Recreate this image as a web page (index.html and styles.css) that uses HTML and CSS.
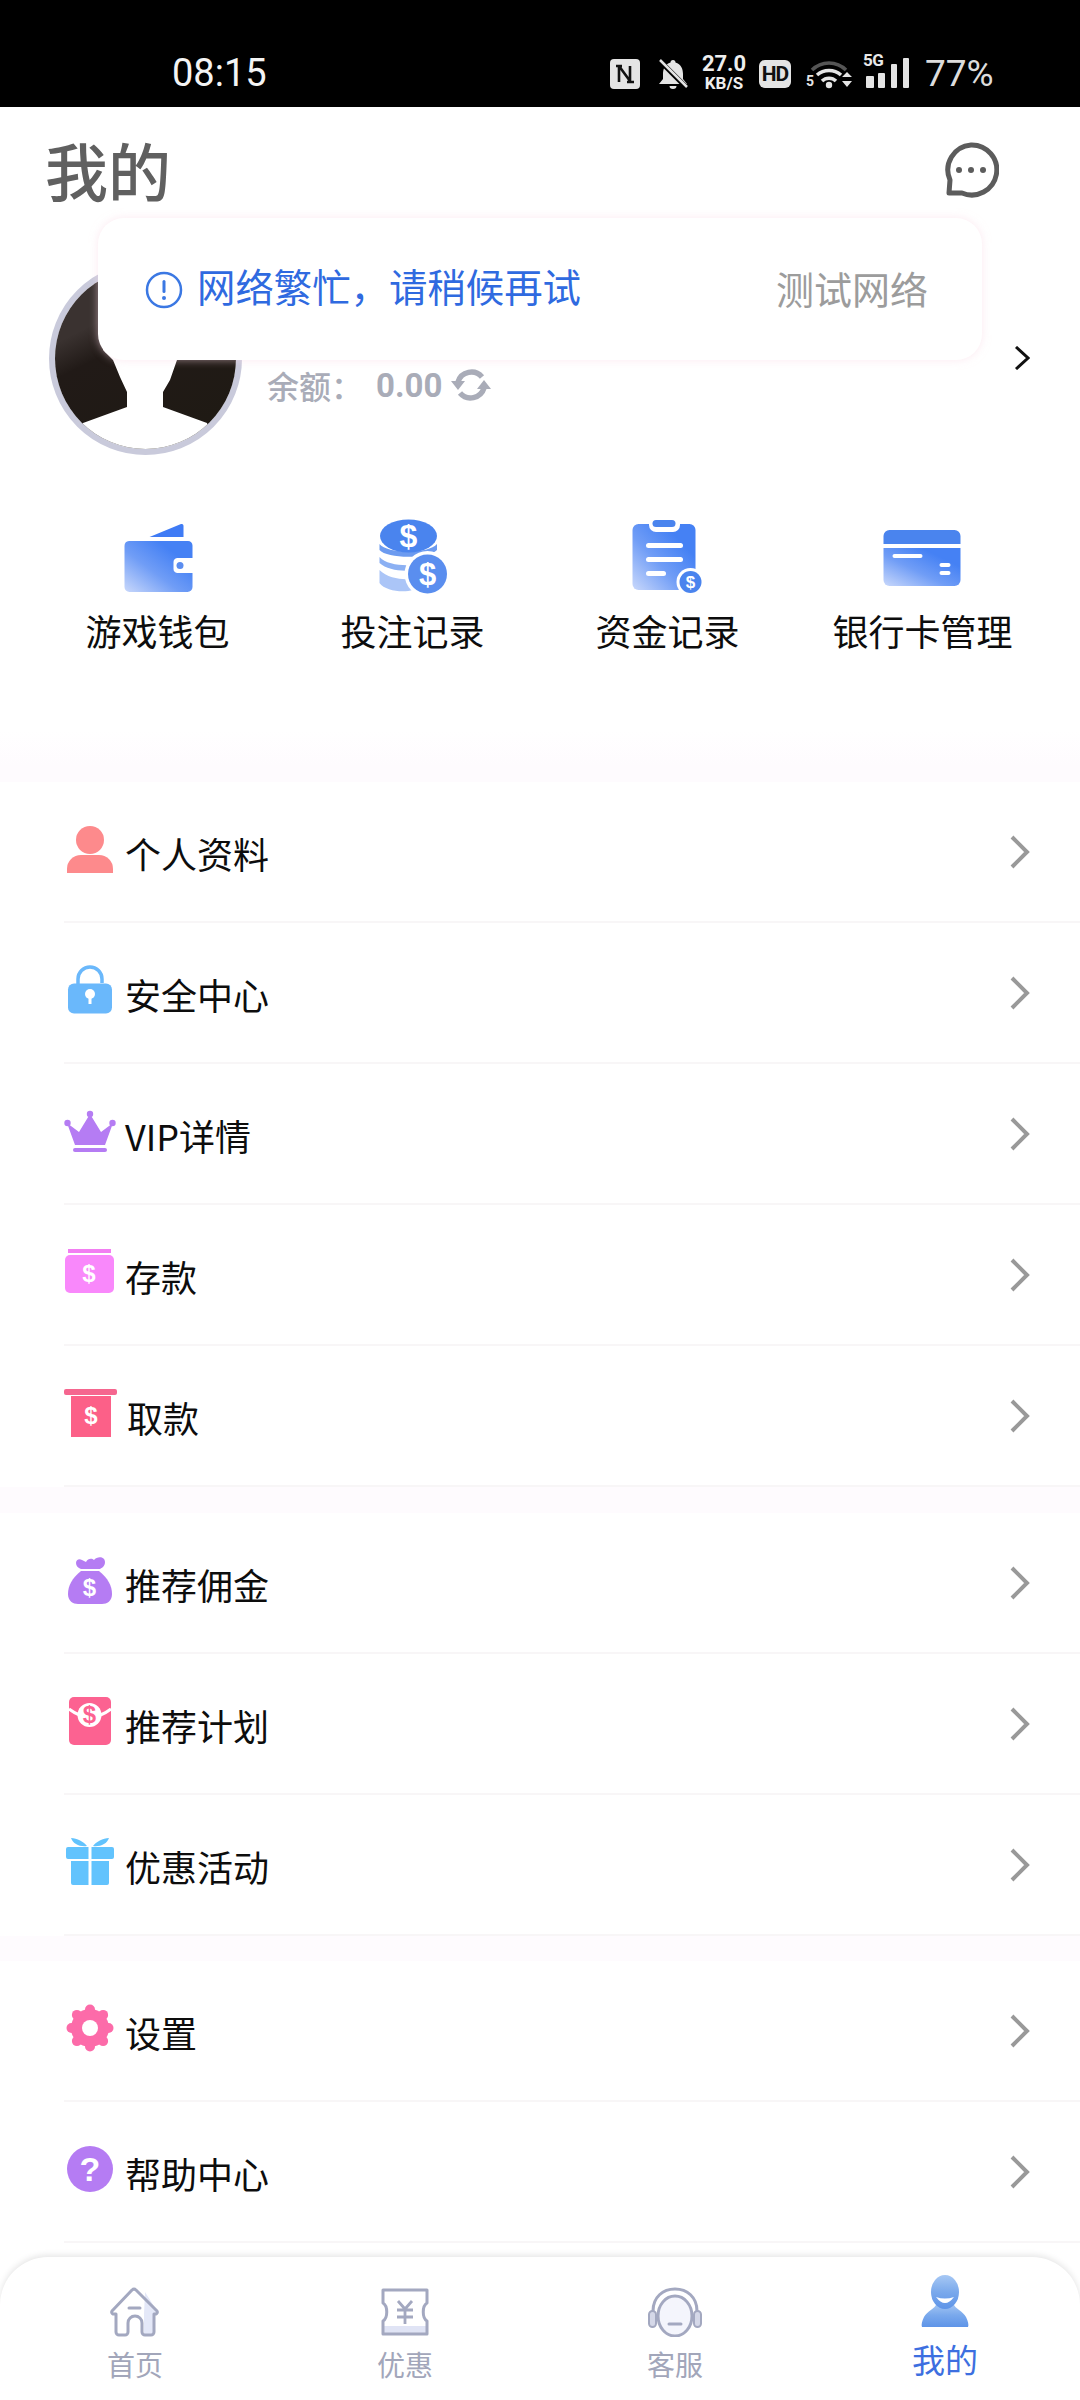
FILE: index.html
```html
<!DOCTYPE html>
<html lang="zh">
<head>
<meta charset="utf-8">
<title>我的</title>
<link rel="stylesheet" href="styles.css">
</head>
<body>
<div class="page">
  <div class="status">
    <span class="time">08:15</span>
    <svg class="st-nfc" viewBox="0 0 30 30"><rect width="30" height="30" rx="4" fill="#e4e4e4"/><path d="M9 7 V23 M9 7 L20 22 M20 7 V23 M6 7 H12 M17 23 H24" fill="none" stroke="#111" stroke-width="2.6"/></svg>
    <svg class="st-bell" viewBox="0 0 30 30"><path d="M15 1 a2.5 2.5 0 0 1 2.5 2.5 C23 5 25 10 25 15 V20 L29 25 H1 L5 20 V15 C5 10 7 5 12.500 3.500 A2.500 2.500 0 0 1 15 1 Z M11.500 27 H18.500 A3.500 3 0 0 1 11.500 27 Z" fill="#e4e4e4"/><path d="M3 3 L29 29" stroke="#000" stroke-width="5"/><path d="M2 1 L29 28" stroke="#e4e4e4" stroke-width="2.500"/></svg>
    <div class="st-speed"><span class="st-num">27.0</span><span class="st-unit">KB/S</span></div>
    <span class="st-hd">HD</span>
    <svg class="st-wifi" viewBox="0 0 48 34"><path d="M7 14 A24 24 0 0 1 41 14" fill="none" stroke="#555" stroke-width="3.500"/><path d="M12 19 A18 18 0 0 1 36 19" fill="none" stroke="#e4e4e4" stroke-width="3.500"/><path d="M17 25 A10 10 0 0 1 31 25" fill="none" stroke="#e4e4e4" stroke-width="3.500"/><circle cx="24" cy="29" r="3.200" fill="#e4e4e4"/><path d="M37 21 L47 21 L42 16 Z M37 25 L47 25 L42 31 Z" fill="#e4e4e4"/><text x="1" y="30" class="st-five">5</text></svg>
    <div class="st-signal">
      <span class="st-5g">5G</span>
      <svg class="st-bars" viewBox="0 0 44 32"><rect x="0" y="18" width="8" height="12" rx="1" fill="#e4e4e4"/><rect x="12" y="15" width="7" height="15" rx="1" fill="#e4e4e4"/><rect x="25" y="6" width="6" height="24" rx="1" fill="#e4e4e4"/><rect x="37" y="0" width="6" height="30" rx="1" fill="#e4e4e4"/></svg>
    </div>
    <span class="st-batt">77%</span>
  </div>

  <header class="header">
    <h1 class="title">我的</h1>
    <svg class="chat" viewBox="0 0 56 56"><path d="M28 3 A25 25 0 1 1 19 51 L6 51 L7 38 A25 25 0 0 1 28 3 Z" fill="none" stroke="#5c5c5c" stroke-width="5" stroke-linejoin="round"/><circle cx="16" cy="28" r="3" fill="#5c5c5c"/><circle cx="28" cy="28" r="3" fill="#5c5c5c"/><circle cx="40" cy="28" r="3" fill="#5c5c5c"/></svg>
  </header>

  <section class="profile">
    <svg class="avatar" viewBox="0 0 193 193">
      <defs>
        <linearGradient id="av" x1="0" y1="0" x2="0.5" y2="1"><stop offset="0.35" stop-color="#3a3230"/><stop offset="0.5" stop-color="#211a17"/><stop offset="1" stop-color="#1f1a14"/></linearGradient>
        <clipPath id="avc"><circle cx="96.500" cy="96.500" r="90.500"/></clipPath>
        <linearGradient id="blue" x1="0" y1="1" x2="0.75" y2="0.25"><stop offset="0" stop-color="#c9d8fb"/><stop offset="0.55" stop-color="#709df6"/><stop offset="1" stop-color="#4581f4"/></linearGradient>
        <linearGradient id="act" x1="0.5" y1="0" x2="0.5" y2="1"><stop offset="0" stop-color="#a7c8f4"/><stop offset="0.5" stop-color="#7aa9ec"/><stop offset="1" stop-color="#5e94e8"/></linearGradient>
      </defs>
      <circle cx="96.500" cy="96.500" r="93.500" fill="#fff" stroke="#c9cadb" stroke-width="6"/>
      <g clip-path="url(#avc)">
        <rect width="193" height="193" fill="url(#av)"/>
        <path d="M34 161 L78 145 V130 L71 115 L64 98 L54 88 L60 30 H128 L128 98 L121 118 L114 130 V145 L158 161 L170 200 H20 Z" fill="#fff"/>
      </g>
    </svg>
    <div class="balance">
      <span class="bal-label">余额：</span>
      <span class="bal-value">0.00</span>
      <svg class="refresh" viewBox="0 0 40 36"><path d="M7 15 A14 14 0 0 1 31 10" fill="none" stroke="#a9acb8" stroke-width="5.500"/><path d="M33 21 A14 14 0 0 1 9 26" fill="none" stroke="#a9acb8" stroke-width="5.500"/><path d="M0 14 H14 L7 23 Z M26 22 H40 L33 13 Z" fill="#a9acb8"/></svg>
    </div>
    <svg class="profile-chev" viewBox="0 0 16 24"><path d="M2 1 L14 12 L2 23" fill="none" stroke="#111" stroke-width="3"/></svg>
  </section>

  <nav class="actions">
    <div class="action">
      <svg class="action-icon" viewBox="0 0 80 80"><path d="M31.500 20 L63 7 a2 2 0 0 1 2.500 2 V20 Z" fill="#3f7bf5"/><path d="M11 24 H70 a4.500 4.500 0 0 1 4.500 4.500 V41 H60 a4 4 0 0 0-4.500 4 V52 a4 4 0 0 0 4.500 4 H74.500 V70 a5 5 0 0 1-5 5 H11.500 a5 5 0 0 1-5-5 V29 a5 5 0 0 1 4.500-5 Z" fill="url(#blue)"/><circle cx="62" cy="48.500" r="3.500" fill="#5b8df0"/></svg>
      <span class="action-label">游戏钱包</span>
    </div>
    <div class="action">
      <svg class="action-icon" viewBox="0 0 80 80"><path d="M6.500 27 C14 37 56 37 64 27 V33 C56 42 14 42 6.500 33 Z" fill="#6c9bf0"/><path d="M6.500 40 C14 49 40 50 46 46 L41 53 C30 55 14 53 6.500 46 Z" fill="#8bb0f3"/><path d="M6.500 53 C14 61 30 63 36 62 L40 73 C30 76 12 74 6.500 66 Z" fill="#abc5f7"/><ellipse cx="35.500" cy="19" rx="28.500" ry="16.500" fill="#4a84ee"/><text x="35.500" y="30" class="coin-big">$</text><circle cx="54.500" cy="57" r="23" fill="#fff"/><circle cx="54.500" cy="57" r="19.500" fill="#5a8eef"/><text x="54.500" y="68" class="coin-mid">$</text></svg>
      <span class="action-label">投注记录</span>
    </div>
    <div class="action">
      <svg class="action-icon" viewBox="0 0 80 80"><rect x="4.500" y="7" width="63" height="66" rx="6" fill="url(#blue)"/><rect x="21" y="0" width="31" height="15" rx="7" fill="#fff"/><rect x="24.500" y="3" width="23" height="7" rx="3.500" fill="#4a84ee"/><rect x="18" y="26" width="37" height="5" rx="2.500" fill="#fff"/><rect x="18" y="40" width="37" height="5" rx="2.500" fill="#fff"/><rect x="18" y="54" width="20" height="5" rx="2.500" fill="#fff"/><circle cx="62.500" cy="65" r="14" fill="#fff"/><circle cx="62.500" cy="65" r="11" fill="#4a84ee"/><text x="62.500" y="71" class="coin-small">$</text></svg>
      <span class="action-label">资金记录</span>
    </div>
    <div class="action">
      <svg class="action-icon" viewBox="0 0 80 80"><path d="M6.500 13 H71.500 a6 6 0 0 1 6 6 V27 H0.500 V19 a6 6 0 0 1 6-6 Z" fill="#4a84ee"/><path d="M0.500 31 H77.500 V63 a6 6 0 0 1-6 6 H6.500 a6 6 0 0 1-6-6 Z" fill="url(#blue)"/><rect x="9.500" y="37" width="30" height="4" rx="2" fill="#fff"/><rect x="56.500" y="46" width="11" height="4" rx="2" fill="#fff"/><rect x="56.500" y="54" width="11" height="4" rx="2" fill="#fff"/></svg>
      <span class="action-label">银行卡管理</span>
    </div>
  </nav>

  <div class="band band-top"></div>

  <ul class="menu">
    <li class="row">
      <svg class="row-icon" viewBox="0 0 52 52"><circle cx="26" cy="17" r="14" fill="#fd8a8c"/><path d="M3 50 V46 A14 14 0 0 1 17 32 H35 A14 14 0 0 1 49 46 V50 Z" fill="#fd8a8c"/></svg>
      <span class="row-label">个人资料</span>
      <svg class="chev" viewBox="0 0 22 36"><path d="M3 3 L18 18 L3 33" fill="none" stroke="#999" stroke-width="4"/></svg>
    </li>
    <li class="row">
      <svg class="row-icon" viewBox="0 0 52 52"><path d="M14 21 V15 A12 12 0 0 1 38 15 V19" fill="none" stroke="#6ab8fb" stroke-width="3.500"/><rect x="4" y="19.500" width="44" height="30" rx="6" fill="#6ab8fb"/><circle cx="26" cy="30" r="5" fill="#fff"/><rect x="24.500" y="30" width="3" height="10" fill="#fff"/></svg>
      <span class="row-label">安全中心</span>
      <svg class="chev" viewBox="0 0 22 36"><path d="M3 3 L18 18 L3 33" fill="none" stroke="#999" stroke-width="4"/></svg>
    </li>
    <li class="row">
      <svg class="row-icon" viewBox="0 0 52 52"><path d="M3 18 L15 27 L26 9 L37 27 L49 18 L41 40 H11 Z" fill="#b57cf3"/><circle cx="3.500" cy="18" r="3.200" fill="#b57cf3"/><circle cx="26" cy="9" r="3.200" fill="#b57cf3"/><circle cx="48.500" cy="18" r="3.200" fill="#b57cf3"/><rect x="9" y="43" width="34" height="4" rx="2" fill="#b57cf3"/></svg>
      <span class="row-label">VIP详情</span>
      <svg class="chev" viewBox="0 0 22 36"><path d="M3 3 L18 18 L3 33" fill="none" stroke="#999" stroke-width="4"/></svg>
    </li>
    <li class="row">
      <svg class="row-icon" viewBox="0 0 52 52"><rect x="4" y="3" width="43" height="4" fill="#f27ef2"/><rect x="1" y="9" width="49" height="38" rx="5" fill="#f988fb"/><text x="25" y="36" class="dollar">$</text></svg>
      <span class="row-label">存款</span>
      <svg class="chev" viewBox="0 0 22 36"><path d="M3 3 L18 18 L3 33" fill="none" stroke="#999" stroke-width="4"/></svg>
    </li>
    <li class="row">
      <svg class="row-icon icon-wide" viewBox="0 0 54 52"><rect x="0" y="2" width="53" height="6" rx="2" fill="#f5668f"/><rect x="7" y="9" width="40" height="41" fill="#fc6088"/><text x="27" y="37" class="dollar">$</text></svg>
      <span class="row-label">取款</span>
      <svg class="chev" viewBox="0 0 22 36"><path d="M3 3 L18 18 L3 33" fill="none" stroke="#999" stroke-width="4"/></svg>
    </li>
  </ul>

  <div class="band band-a"></div>

  <ul class="menu">
    <li class="row">
      <svg class="row-icon" viewBox="0 0 52 52"><path d="M12 9 C12 6 15 4 18 6 L22 8 C24 4 28 4 30 6 C33 2 41 2 41 8 C41 12 38 14 36 15 H17 C14 14 12 12 12 9 Z" fill="#b57cf3"/><path d="M17 17 H35 C44 24 48 32 48 40 C48 47 43 50 38 50 H14 C9 50 4 47 4 40 C4 32 8 24 17 17 Z" fill="#b57cf3"/><text x="25.500" y="42" class="dollar">$</text></svg>
      <span class="row-label">推荐佣金</span>
      <svg class="chev" viewBox="0 0 22 36"><path d="M3 3 L18 18 L3 33" fill="none" stroke="#999" stroke-width="4"/></svg>
    </li>
    <li class="row">
      <svg class="row-icon" viewBox="0 0 52 52"><rect x="5" y="2" width="42" height="48" rx="5" fill="#fc6291"/><path d="M5 14 Q26 30 47 14" fill="none" stroke="#fff" stroke-width="3"/><circle cx="25.500" cy="20" r="12" fill="#fff"/><text x="25.500" y="28" class="dollar dollar-pink">$</text></svg>
      <span class="row-label">推荐计划</span>
      <svg class="chev" viewBox="0 0 22 36"><path d="M3 3 L18 18 L3 33" fill="none" stroke="#999" stroke-width="4"/></svg>
    </li>
    <li class="row">
      <svg class="row-icon" viewBox="0 0 52 52"><path d="M7 2 C13 2 20 6 23 10 C16 11 9 8 7 2 Z M45 2 C39 2 32 6 29 10 C36 11 43 8 45 2 Z" fill="#62c3fd"/><path d="M4 11 H24.500 V23 H4 a2 2 0 0 1-2-2 V13 a2 2 0 0 1 2-2 Z M27.500 11 H48 a2 2 0 0 1 2 2 V21 a2 2 0 0 1-2 2 H27.500 Z" fill="#62c3fd"/><path d="M7 25 H24.500 V49 H9 a2 2 0 0 1-2-2 Z M27.500 25 H45 V47 a2 2 0 0 1-2 2 H27.500 Z" fill="#62c3fd"/></svg>
      <span class="row-label">优惠活动</span>
      <svg class="chev" viewBox="0 0 22 36"><path d="M3 3 L18 18 L3 33" fill="none" stroke="#999" stroke-width="4"/></svg>
    </li>
  </ul>

  <div class="band band-b"></div>

  <ul class="menu">
    <li class="row">
      <svg class="row-icon" viewBox="0 0 52 52"><g fill="#fc6ba9"><circle cx="26" cy="26" r="19"/><circle cx="26" cy="7.500" r="5"/><circle cx="26" cy="44.500" r="5"/><circle cx="7.500" cy="26" r="5"/><circle cx="44.500" cy="26" r="5"/><circle cx="12.900" cy="12.900" r="5"/><circle cx="39.100" cy="12.900" r="5"/><circle cx="12.900" cy="39.100" r="5"/><circle cx="39.100" cy="39.100" r="5"/></g><circle cx="26" cy="26" r="8" fill="#fff"/></svg>
      <span class="row-label">设置</span>
      <svg class="chev" viewBox="0 0 22 36"><path d="M3 3 L18 18 L3 33" fill="none" stroke="#999" stroke-width="4"/></svg>
    </li>
    <li class="row">
      <svg class="row-icon" viewBox="0 0 52 52"><circle cx="26" cy="26" r="23" fill="#b57cf3"/><text x="26" y="38" class="question">?</text></svg>
      <span class="row-label">帮助中心</span>
      <svg class="chev" viewBox="0 0 22 36"><path d="M3 3 L18 18 L3 33" fill="none" stroke="#999" stroke-width="4"/></svg>
    </li>
  </ul>

  <div class="toast">
    <svg class="toast-icon" viewBox="0 0 38 38"><circle cx="19" cy="19" r="17" fill="none" stroke="#3b78e3" stroke-width="2.500"/><rect x="17.500" y="9" width="3" height="13" rx="1.500" fill="#3b78e3"/><circle cx="19" cy="27" r="2" fill="#3b78e3"/></svg>
    <span class="toast-text">网络繁忙，请稍候再试</span>
    <span class="toast-action">测试网络</span>
  </div>

  <footer class="tabbar">
    <div class="tab">
      <svg class="tab-icon" viewBox="0 0 56 50"><path d="M38 5 L50 24 a2 2 0 0 1-1 3 H47 V45 a3 3 0 0 1-3 3 H37 V27 Z" fill="#e4e8f8"/><path d="M9 27 H6 a2 2 0 0 1-1-3 L25 3 a3 3 0 0 1 4 0 L50 24 a2 2 0 0 1-1 3 H47 V45 a3 3 0 0 1-3 3 H38 a3 3 0 0 1-3-3 V36 a7 7 0 0 0-14 0 V45 a3 3 0 0 1-3 3 H12 a3 3 0 0 1-3-3 Z" fill="none" stroke="#a3a8c0" stroke-width="3" stroke-linejoin="round"/><path d="M22 21 H33" stroke="#a3a8c0" stroke-width="3" stroke-linecap="round"/></svg>
      <span class="tab-label">首页</span>
    </div>
    <div class="tab">
      <svg class="tab-icon" viewBox="0 0 56 50"><rect x="7" y="39" width="42" height="8" fill="#e0e4f5"/><path d="M6 3 H50 V16 C45 19 45 31 50 34 V47 H6 V34 C11 31 11 19 6 16 Z" fill="none" stroke="#a3a8c0" stroke-width="3" stroke-linejoin="round"/><path d="M21 14 L28 22 L35 14 M20 23 H36 M20 30 H36 M28 22 V37" fill="none" stroke="#a3a8c0" stroke-width="2.800"/></svg>
      <span class="tab-label">优惠</span>
    </div>
    <div class="tab">
      <svg class="tab-icon" viewBox="0 0 56 50"><ellipse cx="28" cy="29" rx="17" ry="20" fill="#f4f5fc" stroke="#a3a8c0" stroke-width="3"/><path d="M6 24 C6 10 16 2 28 2 C40 2 50 10 50 24" fill="none" stroke="#a3a8c0" stroke-width="3"/><rect x="2" y="24" width="7" height="16" rx="3.500" fill="#d5d8e8" stroke="#a3a8c0" stroke-width="2"/><rect x="47" y="24" width="7" height="16" rx="3.500" fill="#d5d8e8" stroke="#a3a8c0" stroke-width="2"/><path d="M22 37 H34" stroke="#a3a8c0" stroke-width="3" stroke-linecap="round"/></svg>
      <span class="tab-label">客服</span>
    </div>
    <div class="tab tab-active">
      <svg class="tab-icon-active" viewBox="0 0 56 54"><path d="M20 28 C18 34 10 36 7 42 C5 46 4 50 5 52 H51 C52 50 51 46 49 42 C46 36 38 34 36 28 Z" fill="url(#act)"/><ellipse cx="28" cy="17" rx="14" ry="17" fill="url(#act)"/><path d="M19 22 Q28 34 37 22 Q28 25 19 22 Z" fill="#fff"/></svg>
      <span class="tab-label-active">我的</span>
    </div>
  </footer>
</div>
</body>
</html>
```

FILE: styles.css
```css
* { box-sizing: border-box; }
html, body { margin: 0; padding: 0; background: #fff; }
body { font-family: "Noto Sans CJK SC", "Noto Sans", sans-serif; color: #1a1a1a; }
.page { position: relative; width: 1080px; height: 2400px; overflow: hidden; background: #fff; }

/* status bar */
.status { display: flex; align-items: center; height: 107px; padding-left: 172px; padding-top: 38px; background: #000; color: #e8e8e8; font-family: Roboto, sans-serif; }
.time { width: 438px; font-size: 38px; color: #f4f4f4; }
.st-nfc { width: 30px; height: 30px; margin-right: 18px; margin-top: 3px; }
.st-bell { width: 30px; height: 30px; margin-right: 14px; margin-top: 3px; }
.st-speed { display: flex; flex-direction: column; align-items: center; gap: 1px; width: 44px; margin-right: 13px; font-weight: 700; color: #eee; }
.st-num { font-size: 22px; line-height: 20px; }
.st-unit { font-size: 17px; line-height: 17px; }
.st-hd { width: 32px; height: 28px; margin-right: 14px; margin-top: 2px; background: #e4e4e4; border-radius: 6px; color: #111; font-size: 21px; font-weight: 700; line-height: 28px; text-align: center; letter-spacing: -1px; }
.st-wifi { width: 48px; height: 34px; margin-right: 13px; }
.st-five { fill: #e4e4e4; font: 700 14px Roboto, sans-serif; }
.st-signal { position: relative; width: 44px; height: 32px; margin-right: 15px; margin-top: 3px; }
.st-5g { position: absolute; left: -3px; top: -7px; font-size: 17px; font-weight: 700; line-height: 18px; letter-spacing: -.5px; }
.st-bars { display: block; width: 44px; height: 32px; }
.st-batt { font-size: 37px; color: #dcdcdc; margin-top: 2px; }

/* header */
.header { display: flex; align-items: center; justify-content: space-between; height: 126px; padding: 0 81px 0 45px; }
.title { margin: 0 0 2px; font-size: 63px; font-weight: 500; line-height: 80px; color: #606060; }
.chat { width: 56px; height: 56px; }

/* profile */
.profile { display: flex; align-items: flex-start; height: 284px; padding-left: 49px; }
.avatar { width: 193px; height: 193px; margin-top: 29px; flex: none; }
.balance { display: flex; align-items: center; height: 40px; margin-top: 132px; margin-left: 25px; color: #a9acb8; }
.bal-label { font-size: 32px; font-weight: 500; width: 109px; line-height: 40px; }
.bal-value { font-family: Roboto, sans-serif; font-size: 33px; font-weight: 700; width: 75px; }
.refresh { width: 40px; height: 36px; }
.profile-chev { width: 16px; height: 24px; margin-left: auto; margin-top: 113px; margin-right: 50px; }

/* shortcuts */
.actions { display: grid; grid-template-columns: repeat(4, 1fr); height: 213px; padding: 0 30px; align-content: start; }
.action { display: flex; flex-direction: column; align-items: center; gap: 11px; }
.action-icon { width: 80px; height: 80px; overflow: visible; }
.action-label { font-size: 36px; line-height: 44px; color: #0d0d0d; white-space: nowrap; }
.coin-big { fill: #fff; font: 700 32px "Liberation Sans", sans-serif; text-anchor: middle; }
.coin-mid { fill: #fff; font: 700 31px "Liberation Sans", sans-serif; text-anchor: middle; }
.coin-small { fill: #fff; font: 700 17px "Liberation Sans", sans-serif; text-anchor: middle; }

/* bands */
.band { background: #fefbfe; }
.band-top { height: 52px; background: linear-gradient(#fff, #fefbfe 70%); }
.band-a { height: 26px; }
.band-b { height: 25px; }

/* menu */
.menu { margin: 0; padding: 0; list-style: none; }
.row { display: flex; align-items: center; height: 141px; margin-left: 64px; border-bottom: 2px solid #f8f6f7; }
.row-icon { width: 52px; height: 52px; margin-right: 9px; flex: none; margin-top: -6px; overflow: visible; }
.icon-wide { width: 54px; margin-right: 9px; }
.row-label { font-size: 36px; line-height: 46px; margin-top: 3px; color: #0d0d0d; }
.chev { width: 22px; height: 36px; margin-left: auto; margin-right: 49px; }
.dollar { fill: #fff; font: 700 24px "Liberation Sans", sans-serif; text-anchor: middle; }
.dollar-pink { fill: #fc6291; }
.question { fill: #fff; font: 700 34px "Liberation Sans", sans-serif; text-anchor: middle; }

/* toast */
.toast { position: absolute; left: 98px; top: 218px; display: flex; align-items: center; width: 884px; height: 142px; padding: 0 54px 0 47px; background: #fff; border-radius: 26px; box-shadow: 0 0 8px rgba(250, 215, 228, .55); }
.toast-icon { width: 38px; height: 38px; margin-right: 14px; margin-top: 2px; }
.toast-text { font-size: 38.4px; line-height: 50px; margin-bottom: 8px; color: #2f6ae0; }
.toast-action { margin-left: auto; font-size: 38px; line-height: 50px; color: #9c9c9c; margin-bottom: 2px; }

/* tab bar */
.tabbar { position: absolute; left: 0; right: 0; top: 2257px; bottom: 0; display: grid; grid-template-columns: repeat(4, 1fr); background: #fff; border-radius: 48px 48px 0 0; box-shadow: 0 -2px 6px rgba(0, 0, 0, .1); }
.tab { display: flex; flex-direction: column; align-items: center; gap: 9px; padding-top: 30px; }
.tab-active { padding-top: 18px; gap: 10px; }
.tab-icon { width: 56px; height: 50px; }
.tab-icon-active { width: 56px; height: 54px; }
.tab-label { font-size: 28px; line-height: 36px; color: #a2a6ba; }
.tab-label-active { font-size: 33px; line-height: 40px; color: #3d6fe0; }
```
